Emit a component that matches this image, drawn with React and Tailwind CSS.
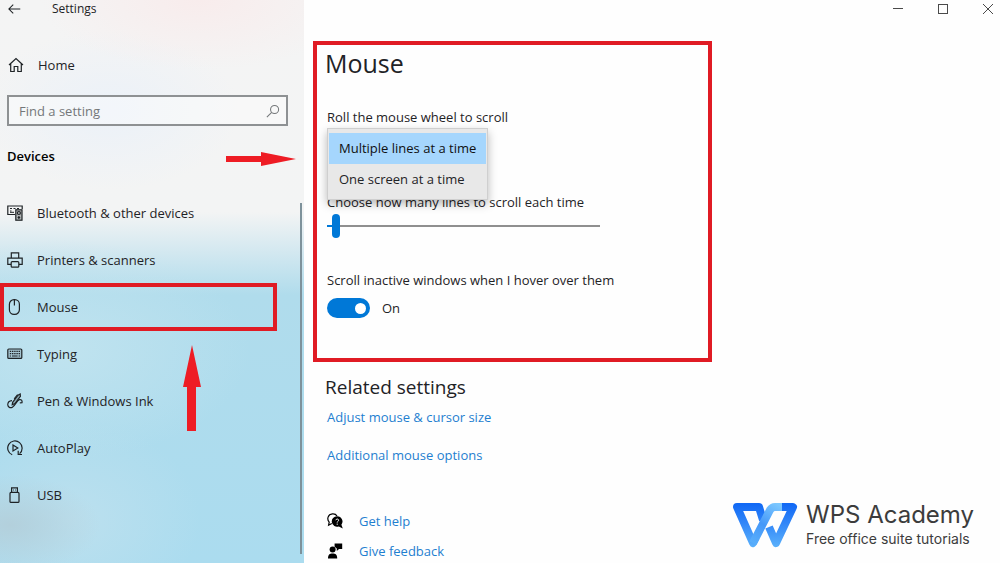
import { useState } from "react";

const navItems = [
  { id: "bluetooth", label: "Bluetooth & other devices", Icon: DevicesIcon },
  { id: "printers", label: "Printers & scanners", Icon: PrinterIcon },
  { id: "mouse", label: "Mouse", Icon: MouseIcon },
  { id: "typing", label: "Typing", Icon: KeyboardIcon },
  { id: "pen", label: "Pen & Windows Ink", Icon: PenIcon },
  { id: "autoplay", label: "AutoPlay", Icon: AutoPlayIcon },
  { id: "usb", label: "USB", Icon: UsbIcon },
];

function Icon({ children, className = "size-4" }) {
  return (
    <svg
      viewBox="0 0 16 16"
      fill="none"
      stroke="currentColor"
      strokeWidth="1.2"
      className={`shrink-0 ${className}`}
      aria-hidden="true"
    >
      {children}
    </svg>
  );
}

function BackIcon() {
  return (
    <Icon className="size-3.5">
      <path d="M14 8H1M6 3L1 8L6 13" />
    </Icon>
  );
}

function HomeIcon() {
  return (
    <Icon>
      <path d="M1 8L8 1.5L15 8M2.7 6.8V14.5H6.2V9.5H9.8V14.5H13.3V6.8" />
    </Icon>
  );
}

function SearchIcon() {
  return (
    <Icon className="size-3.5">
      <circle cx="9.8" cy="6.2" r="4.6" />
      <path d="M6.5 9.5L1 15" />
    </Icon>
  );
}

function DevicesIcon() {
  return (
    <Icon>
      <path d="M8 9.5H.8V1H15.2V4" />
      <path d="M3 3.5H5M6.5 3.5H8.5M3 6H4.5M10 3.5H12" />
      <path d="M3 7.3H7" strokeWidth="1" />
      <rect x="8.8" y="4.8" width="6.2" height="10.4" fill="currentColor" fillOpacity=".3" />
      <circle cx="11.9" cy="8" r="1.5" />
      <path d="M11.9 11V14M10.6 12.5H13.2" />
    </Icon>
  );
}

function PrinterIcon() {
  return (
    <Icon>
      <path d="M4.3 6V.8H11.7V6" />
      <path d="M4 12.3H.8V6.2H15.2V12.3H12" />
      <rect x="4.2" y="9.6" width="7.6" height="5.6" rx="1" />
    </Icon>
  );
}

function MouseIcon() {
  return (
    <Icon>
      <rect x="2.4" y=".7" width="10" height="14.6" rx="4.6" />
      <path d="M7.4 .7V6.5" />
    </Icon>
  );
}

function KeyboardIcon() {
  return (
    <Icon>
      <rect x=".8" y="3" width="14" height="9.4" rx="1" fill="currentColor" fillOpacity=".15" />
      <path d="M2.8 5.4H13M2.8 7.6H13" strokeDasharray="1.4 .8" />
      <path d="M2.8 10H4M5 10H10.6M11.6 10H13" />
    </Icon>
  );
}

function PenIcon() {
  return (
    <Icon>
      <path d="M5.6 9.4L11 2.2L13.2 1L13.4 3.4L8 10.6L5.2 11.8Z" fill="currentColor" fillOpacity=".3" />
      <path d="M10.6 1.6L7.2 5.8" />
      <path d="M5 7.6C2 7.8.7 9.8.8 11.9C1 14.2 3.2 15.4 5.4 14.2C8.6 12.4 9.6 7.4 12.4 6.6C14.2 6.2 15.4 7.6 15 9.6L12.8 9.8" />
    </Icon>
  );
}

function AutoPlayIcon() {
  return (
    <Icon>
      <path d="M5.2 14.8A7.2 7.2 0 1 1 12.6 13.6" />
      <path d="M11.2 10.7V14.5H15" />
      <path d="M6 5L10.8 8L6 11Z" />
    </Icon>
  );
}

function UsbIcon() {
  return (
    <Icon>
      <rect x="3" y="5.4" width="9" height="10" rx="1" />
      <path d="M4.6 5.4V.8H10.4V5.4" />
      <path d="M6 3H6.8M8.2 3H9" />
    </Icon>
  );
}

function HelpIcon() {
  return (
    <Icon>
      <path d="M4.8 10.5L1.6 12.2L2.2 9.2C-.4 6.2.8 1.4 5.4.9C7.6.7 9.2 1.6 10 3" />
      <path
        d="M10.2 3.2A5.3 5.3 0 1 0 11.8 13.5L15.8 15.4L14.4 11.7A5.3 5.3 0 0 0 10.2 3.2Z"
        fill="currentColor"
        stroke="none"
      />
      <path d="M8.8 7.2C9 5.6 11.7 5.7 11.6 7.3C11.5 8.4 10.2 8.3 10.2 9.6M10.2 10.6V11.8" stroke="white" strokeWidth="1" />
    </Icon>
  );
}

function FeedbackIcon() {
  return (
    <Icon>
      <g fill="currentColor" stroke="none">
        <circle cx="5.6" cy="6.6" r="3" />
        <path d="M1 15.6C1 11.8 2.6 10.6 5.6 10.6S10.2 11.8 10.2 15.6Z" />
        <path d="M7.6 .4H15.2V6H12L9.8 8V5.6L7.6 3.8Z" />
      </g>
    </Icon>
  );
}

function WpsLogo() {
  return (
    <svg viewBox="0 0 66 46" className="h-[46px] w-[66px] shrink-0" aria-hidden="true">
      <defs>
        <linearGradient id="wps-left" gradientUnits="userSpaceOnUse" x1="0" y1="2" x2="0" y2="46">
          <stop offset="0" stopColor="#1169f5" />
          <stop offset=".4" stopColor="#2f84f8" />
          <stop offset="1" stopColor="#5cb2fb" />
        </linearGradient>
        <linearGradient id="wps-band" gradientUnits="userSpaceOnUse" x1="46" y1="2" x2="22" y2="46">
          <stop offset="0" stopColor="#7cc8ff" />
          <stop offset=".5" stopColor="#4598f9" />
          <stop offset="1" stopColor="#5cb2fb" />
        </linearGradient>
      </defs>
      <g fill="none" strokeLinejoin="round" strokeWidth="8">
        <path d="M31 18L27 5H5L21 41L24 35" stroke="url(#wps-left)" />
        <path d="M37 25L44 41L61 5H44" stroke="url(#wps-left)" />
        <path d="M21 41L38 8Q40 5 43 5H50" stroke="url(#wps-band)" />
      </g>
    </svg>
  );
}

function Sidebar() {
  const [active, setActive] = useState("mouse");
  const [query, setQuery] = useState("");

  return (
    <aside className="flex w-[304px] shrink-0 flex-col bg-[radial-gradient(ellipse_160px_70px_at_200px_0px,#f8ecec,transparent),radial-gradient(ellipse_130px_80px_at_110px_110px,#ebf1f8,transparent),radial-gradient(ellipse_90px_50px_at_10px_525px,#b3d0dc,transparent),radial-gradient(ellipse_190px_110px_at_60px_350px,#c0e3ef,transparent),radial-gradient(ellipse_130px_100px_at_70px_520px,#bce0ee,transparent),linear-gradient(#f4f4f4_0px,#f3f4f4_212px,#d3e8f0_252px,#b0dcec_295px,#abdcef_100%)]">
      <header className="flex h-[18px] items-center gap-[30px] pl-2">
        <button type="button" aria-label="Back">
          <BackIcon />
        </button>
        <span className="text-xs">Settings</span>
      </header>

      <a href="#home" className="mt-[35px] flex h-6 items-center gap-3.5 pl-2">
        <HomeIcon />
        Home
      </a>

      <div className="ml-[7px] mr-4 mt-[18px] flex h-[31px] items-center border-2 border-[#8e9193] bg-white/40 pl-2.5 pr-1.5 text-[#747779]">
        <input
          type="text"
          aria-label="Find a setting"
          placeholder="Find a setting"
          value={query}
          onChange={(e) => setQuery(e.target.value)}
          className="min-w-0 flex-1 bg-transparent outline-none placeholder:text-[#747779]"
        />
        <SearchIcon />
      </div>

      <h2 className="mt-5 pl-[7px] font-semibold text-black">Devices</h2>

      <div className="mt-[23px] flex flex-1 justify-between">
        <nav className="w-[277px]">
          {navItems.map(({ id, label, Icon: ItemIcon }) => (
            <a
              key={id}
              href={`#${id}`}
              onClick={() => setActive(id)}
              className={`flex items-center gap-3.5 ${
                active === id
                  ? "-mb-px h-12 border-4 border-[#e01b24] pl-[3px]"
                  : "h-[47px] pl-[7px]"
              }`}
            >
              <ItemIcon />
              {label}
            </a>
          ))}
        </nav>
        <div className="mb-[9px] mr-0.5 mt-3.5 w-0.5 bg-[#7e929b]" />
      </div>
    </aside>
  );
}

function WindowControls() {
  return (
    <div className="flex h-[18px] justify-end gap-[21px] text-[#4a4a4a]">
      <button type="button" aria-label="Minimize" className="flex w-6 items-center justify-center">
        <Icon className="size-2.5">
          <path d="M0 7.2H16" strokeWidth="1.6" />
        </Icon>
      </button>
      <button type="button" aria-label="Maximize" className="flex w-6 items-center justify-center">
        <Icon className="size-2.5">
          <rect x=".8" y=".8" width="14.4" height="14.4" strokeWidth="1.6" />
        </Icon>
      </button>
      <button type="button" aria-label="Close" className="flex w-6 items-center justify-center">
        <Icon className="size-2.5">
          <path d="M0 0L16 16M16 0L0 16" strokeWidth="1.6" />
        </Icon>
      </button>
    </div>
  );
}

function MouseSettings() {
  const [wheelMode, setWheelMode] = useState("lines");
  const [lines, setLines] = useState(3);
  const [scrollInactive, setScrollInactive] = useState(true);

  return (
    <section className="ml-[9px] mt-[23px] max-w-[399px] border-4 border-[#e01b24] pb-10 pl-2.5">
      <h1 className="-ml-0.5 pt-0.5 text-[25px] leading-8">Mouse</h1>

      <div className="relative mt-7">
        <label htmlFor="wheel-mode" className="block">
          Roll the mouse wheel to scroll
        </label>
        <select
          id="wheel-mode"
          size={2}
          value={wheelMode}
          onChange={(e) => setWheelMode(e.target.value)}
          className="absolute left-0 top-[21px] h-[72px] w-[161px] overflow-hidden border border-[#cfcfcf] bg-[#e8e8e8] px-px py-1 shadow-[0_4px_9px_rgba(0,0,0,0.28)] outline-none"
        >
          <option
            value="lines"
            className="h-[31px] px-2.5 pt-1.5 pb-0 checked:bg-linear-to-r checked:from-[#a5d6fd] checked:to-[#a5d6fd]"
          >
            Multiple lines at a time
          </option>
          <option
            value="screen"
            className="h-[31px] px-2.5 pt-1.5 pb-0 checked:bg-linear-to-r checked:from-[#a5d6fd] checked:to-[#a5d6fd]"
          >
            One screen at a time
          </option>
        </select>
      </div>

      <label htmlFor="line-count" className="mt-[65px] block">
        Choose how many lines to scroll each time
      </label>
      <input
        id="line-count"
        type="range"
        min="1"
        max="100"
        value={lines}
        onChange={(e) => setLines(Number(e.target.value))}
        className="mt-0.5 block h-6 w-[273px] appearance-none bg-transparent [&::-webkit-slider-runnable-track]:h-0.5 [&::-webkit-slider-runnable-track]:bg-linear-to-r [&::-webkit-slider-runnable-track]:from-[#0078d7] [&::-webkit-slider-runnable-track]:from-2% [&::-webkit-slider-runnable-track]:to-[#8f8f8f] [&::-webkit-slider-runnable-track]:to-2% [&::-webkit-slider-thumb]:-mt-[11px] [&::-webkit-slider-thumb]:h-6 [&::-webkit-slider-thumb]:w-2 [&::-webkit-slider-thumb]:appearance-none [&::-webkit-slider-thumb]:rounded-full [&::-webkit-slider-thumb]:bg-[#0078d7]"
      />

      <label htmlFor="scroll-inactive" className="mt-8 block">
        Scroll inactive windows when I hover over them
      </label>
      <div className="mt-2 flex items-center gap-3">
        <input
          id="scroll-inactive"
          type="checkbox"
          role="switch"
          checked={scrollInactive}
          onChange={(e) => setScrollInactive(e.target.checked)}
          className="flex h-5 w-[43px] appearance-none items-center rounded-full bg-[#8f8f8f] px-1 before:size-[11px] before:rounded-full before:bg-white checked:justify-end checked:bg-[#0078d7]"
        />
        <span>{scrollInactive ? "On" : "Off"}</span>
      </div>
    </section>
  );
}

function App() {
  return (
    <div className="relative flex min-h-screen overflow-hidden bg-[#fefefe] font-['Open_Sans','Noto_Sans',sans-serif] text-[13px] leading-5 text-[#1f2326]">
      <Sidebar />

      <main className="flex min-w-0 flex-1 flex-col">
        <WindowControls />
        <MouseSettings />

        <section className="mt-[11px] flex flex-col items-start pl-[23px] text-[#1f7fd0]">
          <h2 className="-ml-0.5 text-[19px] leading-7 text-[#1f2326]">Related settings</h2>
          <a href="#cursor-size" className="mt-1.5">
            Adjust mouse & cursor size
          </a>
          <a href="#mouse-options" className="mt-[18px]">
            Additional mouse options
          </a>
          <a href="#help" className="mt-[46px] flex items-center gap-4">
            <span className="text-black">
              <HelpIcon />
            </span>
            Get help
          </a>
          <a href="#feedback" className="mt-2.5 flex items-center gap-4">
            <span className="text-black">
              <FeedbackIcon />
            </span>
            Give feedback
          </a>
        </section>
      </main>

      {/* callout arrows */}
      <svg viewBox="0 0 70 14" className="absolute left-[226px] top-[152px] h-3.5 w-[70px]" aria-hidden="true">
        <path d="M0 4H35V0L70 7L35 14V10H0Z" fill="#ee1c24" />
      </svg>
      <svg viewBox="0 0 18 86" className="absolute left-[183px] top-[345px] h-[86px] w-[18px]" aria-hidden="true">
        <path d="M4 86V42H0L9 0L18 42H13V86Z" fill="#ee1c24" />
      </svg>

      <div className="absolute bottom-3.5 right-[26px] flex items-center gap-2 font-[Inter,sans-serif] text-[#3c3c3c]">
        <WpsLogo />
        <div>
          <p className="text-2xl leading-7">WPS Academy</p>
          <p className="text-sm leading-5">Free office suite tutorials</p>
        </div>
      </div>
    </div>
  );
}

export default App;
